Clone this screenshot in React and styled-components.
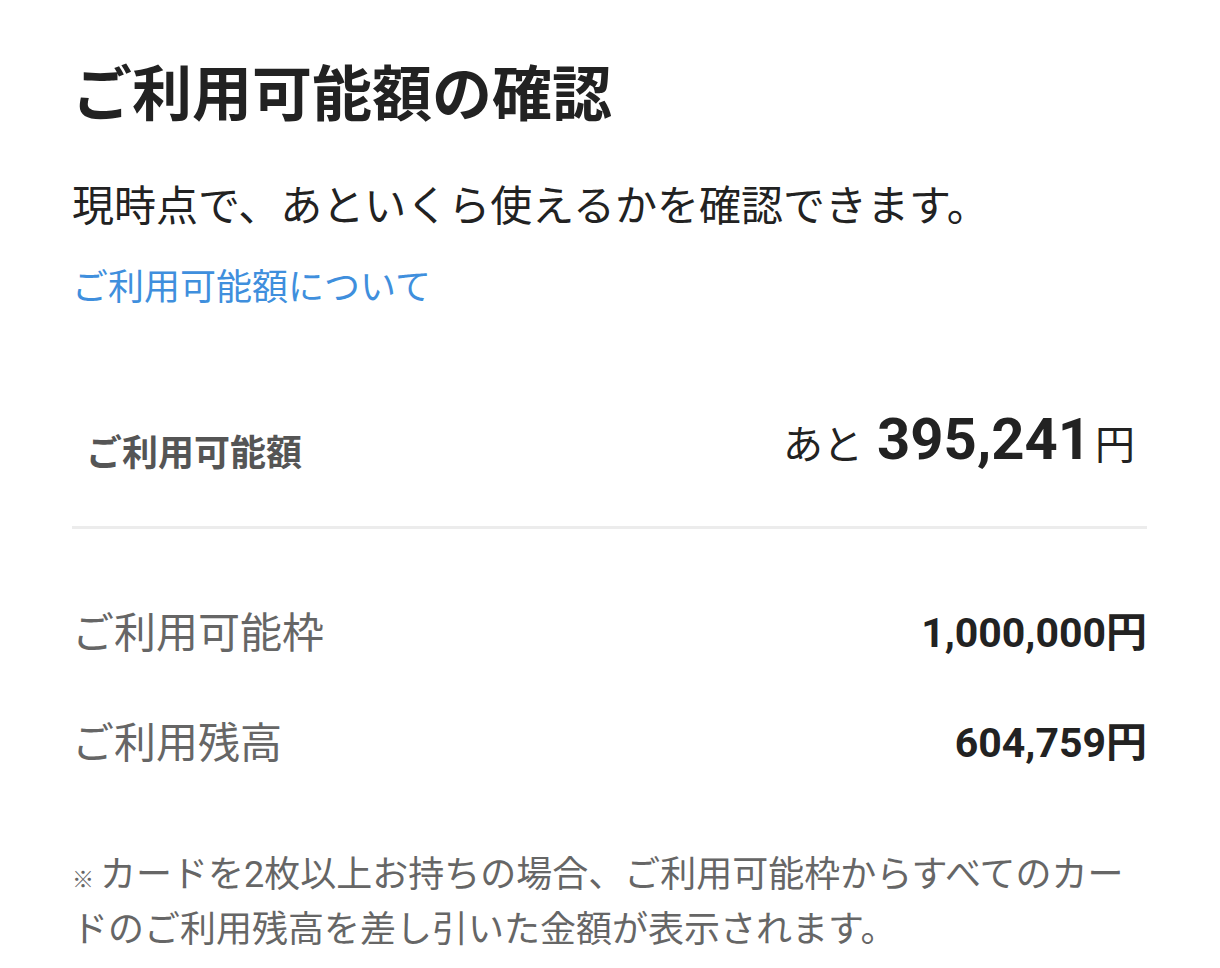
import styled, { createGlobalStyle } from "styled-components";

const GlobalStyle = createGlobalStyle`
    body {
        margin: 0;
        background: #fff;
        font-family: Roboto, "Noto Sans CJK JP", sans-serif;
        color: #222;
    }
`

const Page = styled.div`
    width: 1220px;
    box-sizing: border-box;
    padding: 60px 73px 20px 72px;
`
const Title = styled.h1`
    margin: 0;
    font-size: 60px;
    line-height: 72px;
    font-weight: 700;
    color: #222;
`
const Lead = styled.p`
    margin: 47px 0 0;
    font-size: 42px;
    line-height: 56px;
    color: #222;
`
const InfoLink = styled.a`
    display: block;
    margin-top: 28px;
    font-size: 36px;
    line-height: 50px;
    color: #3f8fdd;
    text-decoration: none;
`
const Summary = styled.div`
    display: flex;
    justify-content: space-between;
    align-items: center;
    height: 163px;
    margin-top: 50px;
    padding: 0 12px 0 14px;
    border-bottom: 3px solid #ececec;
`
const SummaryLabel = styled.span`
    margin-top: 10px;
    font-size: 36px;
    font-weight: 700;
    color: #555;
`
const Remaining = styled.span`
    margin-bottom: 12px;
    font-size: 40px;
    color: #222;
`
const RemainingValue = styled.strong`
    font-size: 58px;
    font-weight: 700;
    margin: 0 4px 0 14px;
`
const DetailList = styled.dl`
    margin: 45px 0 0;
`
const DetailRow = styled.div`
    display: flex;
    justify-content: space-between;
    align-items: center;
    height: 110px;
`
const DetailLabel = styled.dt`
    font-size: 42px;
    color: #666;
`
const DetailValue = styled.dd`
    margin: 0;
    font-size: 41px;
    font-weight: 700;
    color: #222;
`
const Note = styled.p`
    margin: 56px 0 0;
    font-size: 36px;
    line-height: 51px;
    color: #666;
`
const NoteMark = styled.span`
    font-size: 22px;
    margin-right: 6px;
`

const details = [
    { label: "ご利用可能枠", value: "1,000,000円" },
    { label: "ご利用残高", value: "604,759円" },
]

const App = () => {
  return (
    <Page>
        <GlobalStyle />
        <Title>ご利用可能額の確認</Title>
        <Lead>現時点で、あといくら使えるかを確認できます。</Lead>
        <InfoLink href="#">ご利用可能額について</InfoLink>
        <Summary>
            <SummaryLabel>ご利用可能額</SummaryLabel>
            <Remaining>
                あと<RemainingValue>395,241</RemainingValue>円
            </Remaining>
        </Summary>
        <DetailList>
            {details.map((d) => (
                <DetailRow key={d.label}>
                    <DetailLabel>{d.label}</DetailLabel>
                    <DetailValue>{d.value}</DetailValue>
                </DetailRow>
            ))}
        </DetailList>
        <Note><NoteMark>※</NoteMark>カードを2枚以上お持ちの場合、ご利用可能枠からすべてのカードのご利用残高を差し引いた金額が表示されます。</Note>
    </Page>
  )
}

export default App
